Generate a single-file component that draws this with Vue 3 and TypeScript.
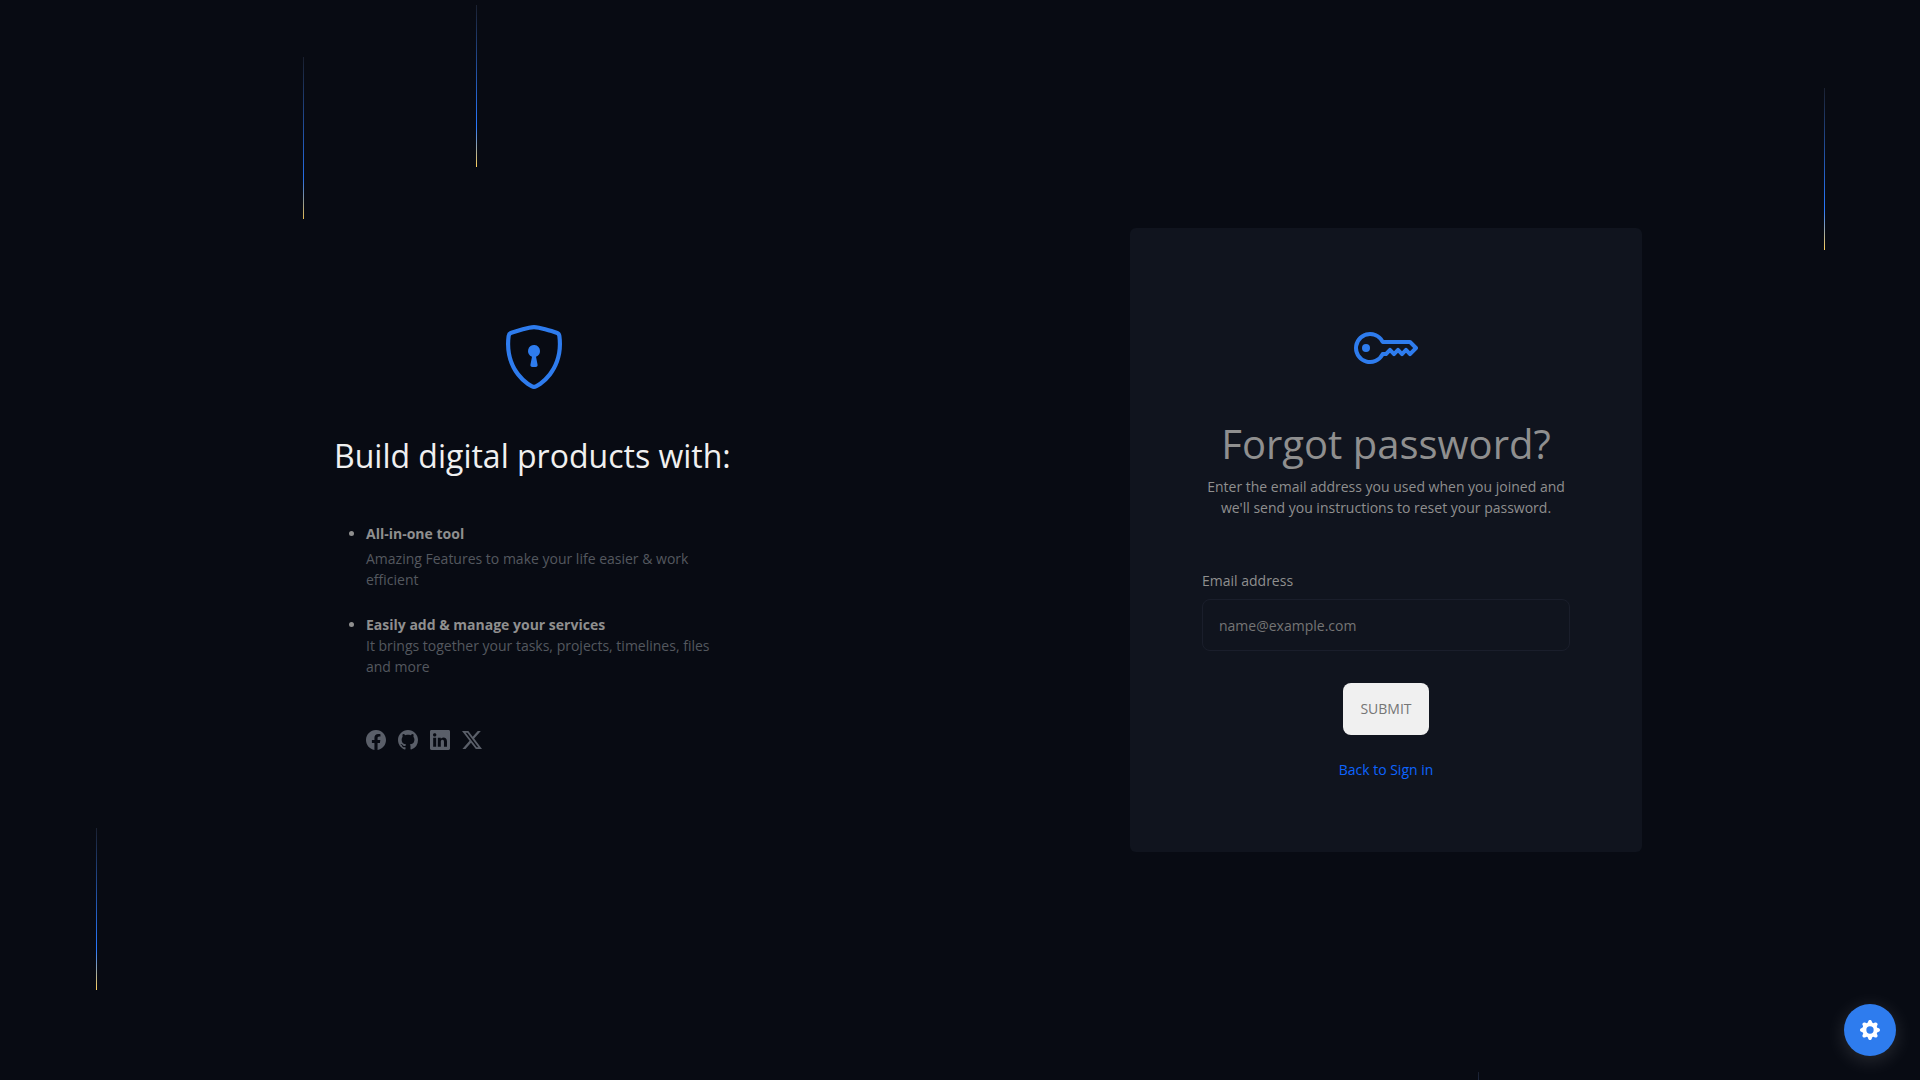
<script setup lang="ts">
import { ref } from 'vue'

interface Streak {
  left: number
  top: number
  opacity: number
}

interface SocialLink {
  name: string
  href: string
  path: string
}

const email = ref('')

/* Positions of the falling streaks, in pixels from the top and percent of the width. */
const streaks: Streak[] = [
  { left: 5, top: 828, opacity: 1 },
  { left: 15.8, top: 57, opacity: 0.9 },
  { left: 24.8, top: 5, opacity: 1 },
  { left: 77, top: 1072, opacity: 1 },
  { left: 95, top: 88, opacity: 1 },
]

const socials: SocialLink[] = [
  {
    name: 'Facebook',
    href: '#facebook',
    path: 'M16 8.049c0-4.446-3.582-8.05-8-8.05C3.58 0-.002 3.603-.002 8.05c0 4.017 2.926 7.347 6.75 7.951v-5.625h-2.03V8.05H6.75V6.275c0-2.017 1.195-3.131 3.022-3.131.876 0 1.791.157 1.791.157v1.98h-1.009c-.993 0-1.303.621-1.303 1.258v1.51h2.218l-.354 2.326H9.25V16c3.824-.604 6.75-3.934 6.75-7.951',
  },
  {
    name: 'GitHub',
    href: '#github',
    path: 'M8 0C3.58 0 0 3.58 0 8c0 3.54 2.29 6.53 5.47 7.59.4.07.55-.17.55-.38 0-.19-.01-.82-.01-1.49-2.01.37-2.53-.49-2.69-.94-.09-.23-.48-.94-.82-1.13-.28-.15-.68-.52-.01-.53.63-.01 1.08.58 1.23.82.72 1.21 1.87.87 2.33.66.07-.52.28-.87.51-1.07-1.78-.2-3.64-.89-3.64-3.95 0-.87.31-1.59.82-2.15-.08-.2-.36-1.02.08-2.12 0 0 .67-.21 2.2.82.64-.18 1.32-.27 2-.27s1.36.09 2 .27c1.53-1.04 2.2-.82 2.2-.82.44 1.1.16 1.92.08 2.12.51.56.82 1.27.82 2.15 0 3.07-1.87 3.75-3.65 3.95.29.25.54.73.54 1.48 0 1.07-.01 1.93-.01 2.2 0 .21.15.46.55.38A8.01 8.01 0 0 0 16 8c0-4.42-3.58-8-8-8',
  },
  {
    name: 'LinkedIn',
    href: '#linkedin',
    path: 'M0 1.146C0 .513.526 0 1.175 0h13.65C15.474 0 16 .513 16 1.146v13.708c0 .633-.526 1.146-1.175 1.146H1.175C.526 16 0 15.487 0 14.854zm4.943 12.248V6.169H2.542v7.225zm-1.2-8.212c.837 0 1.358-.554 1.358-1.248-.015-.709-.52-1.248-1.342-1.248S2.4 3.226 2.4 3.934c0 .694.521 1.248 1.327 1.248zm4.908 8.212V9.359c0-.216.016-.432.08-.586.173-.431.568-.878 1.232-.878.869 0 1.216.662 1.216 1.634v3.865h2.401V9.25c0-2.22-1.184-3.252-2.764-3.252-1.274 0-1.845.7-2.165 1.193v.025h-.016l.016-.025V6.169h-2.4c.03.678 0 7.225 0 7.225z',
  },
  {
    name: 'X',
    href: '#x',
    path: 'M12.6.75h2.454l-5.36 6.142L16 15.25h-4.937l-3.867-5.07-4.425 5.07H.316l5.733-6.57L0 .75h5.063l3.495 4.633L12.601.75Zm-.86 13.028h1.36L4.323 2.145H2.865z',
  },
]
</script>

<template>
  <div class="page">
    <div class="streaks" aria-hidden="true">
      <span
        v-for="streak in streaks"
        :key="streak.left"
        class="streak"
        :style="{ left: streak.left + '%', top: streak.top + 'px', opacity: streak.opacity }"
      ></span>
    </div>

    <main class="layout">
      <section class="intro">
        <div class="intro-body">
          <svg class="hero-icon" viewBox="0 0 16 16" fill="currentColor" aria-hidden="true">
            <path d="M5.338 1.59a61 61 0 0 0-2.837.856.48.48 0 0 0-.328.39c-.554 4.157.726 7.19 2.253 9.188a10.7 10.7 0 0 0 2.287 2.233c.346.244.652.42.893.533q.18.085.293.118a1 1 0 0 0 .101.025 1 1 0 0 0 .1-.025q.114-.034.294-.118c.24-.113.547-.29.893-.533a10.7 10.7 0 0 0 2.287-2.233c1.527-1.997 2.807-5.031 2.253-9.188a.48.48 0 0 0-.328-.39c-.651-.213-1.75-.56-2.837-.855C9.552 1.29 8.531 1.067 8 1.067c-.53 0-1.552.223-2.662.524zM5.072.56C6.157.265 7.31 0 8 0s1.843.265 2.928.56c1.11.3 2.229.655 2.887.87a1.54 1.54 0 0 1 1.044 1.262c.596 4.477-.787 7.795-2.465 9.99a11.8 11.8 0 0 1-2.517 2.453 7 7 0 0 1-1.048.625c-.28.132-.581.24-.829.24s-.548-.108-.829-.24a7 7 0 0 1-1.048-.625 11.8 11.8 0 0 1-2.517-2.453C1.928 10.487.545 7.169 1.141 2.692A1.54 1.54 0 0 1 2.185 1.43 63 63 0 0 1 5.072.56" />
            <path d="M9.5 6.5a1.5 1.5 0 0 1-1 1.415l.385 1.99a.5.5 0 0 1-.491.595h-.788a.5.5 0 0 1-.49-.595l.384-1.99a1.5 1.5 0 1 1 2-1.415" />
          </svg>
          <h2 class="intro-title">Build digital products with:</h2>
          <ul class="features">
            <li class="feature">
              <strong class="feature-name spaced">All-in-one tool</strong>
              <p class="feature-text">Amazing Features to make your life easier &amp; work efficient</p>
            </li>
            <li class="feature">
              <strong class="feature-name">Easily add &amp; manage your services</strong>
              <p class="feature-text">It brings together your tasks, projects, timelines, files and more</p>
            </li>
          </ul>
          <nav class="socials" aria-label="Social links">
            <a v-for="link in socials" :key="link.name" class="social" :href="link.href" :aria-label="link.name">
              <svg viewBox="0 0 16 16" fill="currentColor" aria-hidden="true"><path :d="link.path" /></svg>
            </a>
          </nav>
        </div>
      </section>

      <section class="card">
        <svg class="hero-icon" viewBox="0 0 16 16" fill="currentColor" aria-hidden="true">
          <path d="M0 8a4 4 0 0 1 7.465-2H14a.5.5 0 0 1 .354.146l1.5 1.5a.5.5 0 0 1 0 .708l-1.5 1.5a.5.5 0 0 1-.708 0L13 9.207l-.646.647a.5.5 0 0 1-.708 0L11 9.207l-.646.647a.5.5 0 0 1-.708 0L9 9.207l-.646.647A.5.5 0 0 1 8 10h-.535A4 4 0 0 1 0 8m4-3a3 3 0 1 0 2.712 4.285A.5.5 0 0 1 7.163 9h.63l.853-.854a.5.5 0 0 1 .708 0l.646.647.646-.647a.5.5 0 0 1 .708 0l.646.647.646-.647a.5.5 0 0 1 .708 0l.646.647.793-.793-1-1h-6.63a.5.5 0 0 1-.451-.285A3 3 0 0 0 4 5" />
          <path d="M4 8a1 1 0 1 1-2 0 1 1 0 0 1 2 0" />
        </svg>
        <h1 class="card-title">Forgot password?</h1>
        <p class="card-text">Enter the email address you used when you joined and we'll send you instructions to reset your password.</p>
        <form class="form" @submit.prevent>
          <label class="label" for="email">Email address</label>
          <input id="email" v-model="email" class="input" type="email" placeholder="name@example.com" />
          <button class="submit" type="submit">SUBMIT</button>
        </form>
        <a class="back" href="#sign-in">Back to Sign in</a>
      </section>
    </main>

    <button class="settings" type="button" aria-label="Settings">
      <svg viewBox="0 0 16 16" fill="currentColor" aria-hidden="true">
        <path d="M9.405 1.05c-.413-1.4-2.397-1.4-2.81 0l-.1.34a1.464 1.464 0 0 1-2.105.872l-.31-.17c-1.283-.698-2.686.705-1.987 1.987l.169.311c.446.82.023 1.841-.872 2.105l-.34.1c-1.4.413-1.4 2.397 0 2.81l.34.1a1.464 1.464 0 0 1 .872 2.105l-.17.31c-.698 1.283.705 2.686 1.987 1.987l.311-.169a1.464 1.464 0 0 1 2.105.872l.1.34c.413 1.4 2.397 1.4 2.81 0l.1-.34a1.464 1.464 0 0 1 2.105-.872l.31.17c1.283.698 2.686-.705 1.987-1.987l-.169-.311a1.464 1.464 0 0 1 .872-2.105l.34-.1c1.4-.413 1.4-2.397 0-2.81l-.34-.1a1.464 1.464 0 0 1-.872-2.105l.17-.31c.698-1.283-.705-2.686-1.987-1.987l-.311.169a1.464 1.464 0 0 1-2.105-.872zM8 10.93a2.929 2.929 0 1 1 0-5.86 2.929 2.929 0 0 1 0 5.858z" />
      </svg>
    </button>
  </div>
</template>

<style>
body {
  margin: 0;
  background: #080b13;
}
</style>

<style scoped>
.page {
  position: relative;
  display: flex;
  align-items: center;
  justify-content: center;
  min-height: 100vh;
  overflow: hidden;
  box-sizing: border-box;
  background: #080b13;
  color: #8f8f8f;
  font-family: "Open Sans", "Noto Sans", sans-serif;
  font-size: 14px;
  line-height: 21px;
}

.streaks {
  position: absolute;
  inset: 0;
  overflow: hidden;
  pointer-events: none;
}

.streak {
  position: absolute;
  width: 1px;
  height: 15vh;
  background: linear-gradient(to bottom, #1b2130 0%, #2979ff 75%, #ffd05a 100%);
}

.layout {
  position: relative;
  display: flex;
  flex-wrap: wrap;
  align-items: center;
  justify-content: space-between;
  gap: 32px;
  width: 100%;
  max-width: 1364px;
}

.intro {
  display: flex;
  flex: 0 1 512px;
  justify-content: center;
}

.intro-body {
  display: flex;
  flex-direction: column;
  width: 400px;
  padding-bottom: 5px;
}

.hero-icon {
  display: block;
  align-self: center;
  width: 64px;
  height: 64px;
  color: #2e7cee;
}

.intro-title {
  margin: 48px 0 0;
  color: #f0f0f0;
  font-size: 32px;
  font-weight: 400;
  line-height: 38px;
  white-space: nowrap;
}

.features {
  margin: 48px 0 0;
  padding-left: 32px;
}

.feature + .feature {
  margin-top: 24px;
}

.feature-name {
  display: block;
  font-weight: 700;
}

.spaced {
  margin-bottom: 4px;
}

.feature-text {
  margin: 0;
  color: #54585f;
}

.socials {
  display: flex;
  gap: 12px;
  margin-top: 53px;
  padding-left: 32px;
}

.social {
  display: block;
  width: 20px;
  height: 20px;
  color: #5a5f69;
}

.social svg {
  display: block;
  width: 100%;
  height: 100%;
}

.card {
  display: flex;
  flex: 0 1 512px;
  flex-direction: column;
  align-items: center;
  box-sizing: border-box;
  padding: 88px 72px 72px;
  border-radius: 6px;
  background: #10141e;
}

.card-title {
  margin: 40px 0 8px;
  font-size: 40px;
  font-weight: 400;
  line-height: 48px;
  white-space: nowrap;
}

.card-text {
  margin: 0;
  text-align: center;
}

.form {
  display: flex;
  flex-direction: column;
  align-self: stretch;
  margin-top: 52px;
}

.label {
  margin-bottom: 8px;
}

.input {
  box-sizing: border-box;
  width: 100%;
  height: 52px;
  padding: 0 16px;
  border: 1px solid #1a1e2b;
  border-radius: 8px;
  background: transparent;
  color: #8f8f8f;
  font: inherit;
  outline: none;
}

.input::placeholder {
  color: #757575;
  opacity: 1;
}

.submit {
  align-self: center;
  margin-top: 32px;
  padding: 15px 17px 16px;
  border: 0;
  border-radius: 8px;
  background: #f0f0f0;
  color: #757575;
  font: inherit;
  cursor: pointer;
}

.back {
  margin-top: 24px;
  color: #0d64ff;
  text-decoration: none;
}

.settings {
  position: absolute;
  right: 24px;
  bottom: 24px;
  display: flex;
  align-items: center;
  justify-content: center;
  width: 52px;
  height: 52px;
  padding: 0;
  border: 0;
  border-radius: 50%;
  background: #2e7cee;
  box-shadow: 0 4px 20px rgba(255, 255, 255, 0.14);
  color: #ffffff;
  cursor: pointer;
}

.settings svg {
  width: 20px;
  height: 20px;
}
</style>
